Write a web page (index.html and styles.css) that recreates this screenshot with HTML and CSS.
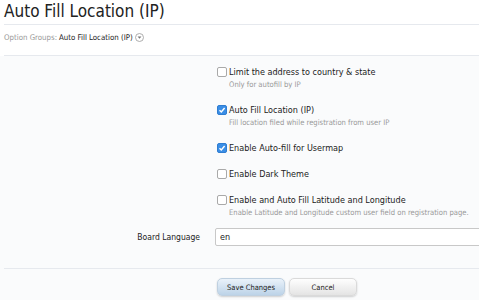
FILE: index.html
```html
<!DOCTYPE html>
<html lang="en">
<head>
  <meta charset="UTF-8">
  <title>Auto Fill Location (IP)</title>
  <link rel="stylesheet" href="styles.css">
</head>
<body>
  <div class="titleBar">
    <h1>Auto Fill Location (IP)</h1>
  </div>

  <div class="breadcrumb">
    <span class="crumbLabel">Option Groups:</span>
    <a href="#" class="crumbLink">Auto Fill Location (IP)</a>
    <svg class="crumbMenu" width="9" height="9" viewBox="0 0 9 9">
      <circle cx="4.5" cy="4.5" r="4" fill="#fff" stroke="#999" stroke-width="0.8"/>
      <path d="M2.6 3.5 L6.4 3.5 L4.5 5.8 Z" fill="#777"/>
    </svg>
  </div>

  <form class="xenForm">
    <div class="ctrlUnit">
      <div class="ctrlLabel"></div>
      <div class="ctrlInput">
        <label class="check"><span class="box"></span>Limit the address to country &amp; state</label>
        <p class="hint">Only for autofill by IP</p>
      </div>
    </div>

    <div class="ctrlUnit">
      <div class="ctrlLabel"></div>
      <div class="ctrlInput">
        <label class="check"><span class="box checked"><svg width="8" height="8" viewBox="0 0 8 8"><path d="M1.5 4.2 L3.3 6 L6.6 2" fill="none" stroke="#fff" stroke-width="1.4"/></svg></span>Auto Fill Location (IP)</label>
        <p class="hint">Fill location filed while registration from user IP</p>
      </div>
    </div>

    <div class="ctrlUnit">
      <div class="ctrlLabel"></div>
      <div class="ctrlInput">
        <label class="check"><span class="box checked"><svg width="8" height="8" viewBox="0 0 8 8"><path d="M1.5 4.2 L3.3 6 L6.6 2" fill="none" stroke="#fff" stroke-width="1.4"/></svg></span>Enable Auto-fill for Usermap</label>
      </div>
    </div>

    <div class="ctrlUnit">
      <div class="ctrlLabel"></div>
      <div class="ctrlInput">
        <label class="check"><span class="box"></span>Enable Dark Theme</label>
      </div>
    </div>

    <div class="ctrlUnit">
      <div class="ctrlLabel"></div>
      <div class="ctrlInput">
        <label class="check"><span class="box"></span>Enable and Auto Fill Latitude and Longitude</label>
        <p class="hint">Enable Latitude and Longitude custom user field on registration page.</p>
      </div>
    </div>

    <div class="ctrlUnit textUnit">
      <label class="ctrlLabel" for="lang">Board Language</label>
      <div class="ctrlInput">
        <input type="text" id="lang" class="textCtrl" value="en">
      </div>
    </div>

    <div class="submitUnit">
      <button type="button" class="button primary">Save Changes</button>
      <button type="button" class="button">Cancel</button>
    </div>
  </form>
</body>
</html>
```

FILE: styles.css
```css
body {
  margin: 0;
  padding: 0;
  background-color: #fff;
  font-family: "Liberation Sans Narrow", "DejaVu Sans Condensed", "Liberation Sans", sans-serif;
  color: #222;
  overflow: hidden;
}

.titleBar {
  margin-left: 4px;
  border-bottom: 1px solid #e6e9ee;
  height: 24px;
}

.titleBar h1 {
  margin: 0;
  font-size: 17px;
  font-weight: normal;
  line-height: 22px;
  color: #222;
}

.breadcrumb {
  margin-left: 4px;
  display: flex;
  align-items: center;
  font-size: 7.8px;
  border-bottom: 1px solid #e6e9ee;
  box-sizing: border-box;
  height: 31px;
  padding-bottom: 6px;
}

.crumbLabel {
  color: #999;
  margin-right: 2px;
}

.crumbLink {
  color: #222;
  text-decoration: none;
}

.crumbMenu {
  margin-left: 2px;
}

.xenForm {
  background-color: #fafbfc;
  padding-top: 3px;
}

.ctrlUnit {
  display: grid;
  grid-template-columns: 200px 1fr;
  column-gap: 15px;
  padding: 6px 0;
}

.ctrlLabel {
  text-align: right;
  font-size: 8.5px;
  line-height: 18px;
  color: #222;
}

.check {
  display: flex;
  align-items: center;
  font-size: 9px;
  line-height: 14px;
  height: 14px;
  white-space: nowrap;
}

.box {
  box-sizing: border-box;
  width: 10px;
  height: 10px;
  margin: 0 2px;
  border: 1px solid #a9a9a9;
  border-radius: 2px;
  background-color: #fff;
  display: flex;
  align-items: center;
  justify-content: center;
}

.box.checked {
  background-color: #3a8ee6;
  border-color: #2f7dd1;
}

.hint {
  margin: 0 0 0 14px;
  font-size: 7.6px;
  line-height: 12px;
  color: #999;
  white-space: nowrap;
}

.textUnit {
  padding: 3px 0 22px;
  border-bottom: 1px solid #e6e9ee;
  margin-left: 4px;
  grid-template-columns: 196px 1fr;
}

.textCtrl {
  box-sizing: border-box;
  width: 320px;
  height: 18px;
  margin: 0;
  padding: 0 4px;
  border: 1px solid #c8c8c8;
  border-radius: 2px;
  background-color: #fff;
  font-family: inherit;
  font-size: 9px;
  color: #222;
  display: block;
}

.submitUnit {
  display: flex;
  gap: 4px;
  padding: 9px 0 10px 217px;
}

.button {
  width: 68px;
  height: 18px;
  padding: 0;
  border: 1px solid #dadada;
  border-radius: 5px;
  background: linear-gradient(#fefefe, #e4e4e4);
  box-shadow: 0 1px 2px rgba(0, 0, 0, 0.18);
  font-family: inherit;
  font-size: 7.5px;
  color: #222;
}

.button.primary {
  border-color: #bfd0e0;
  background: linear-gradient(#eaf2fa, #bcd3e8);
}
```
